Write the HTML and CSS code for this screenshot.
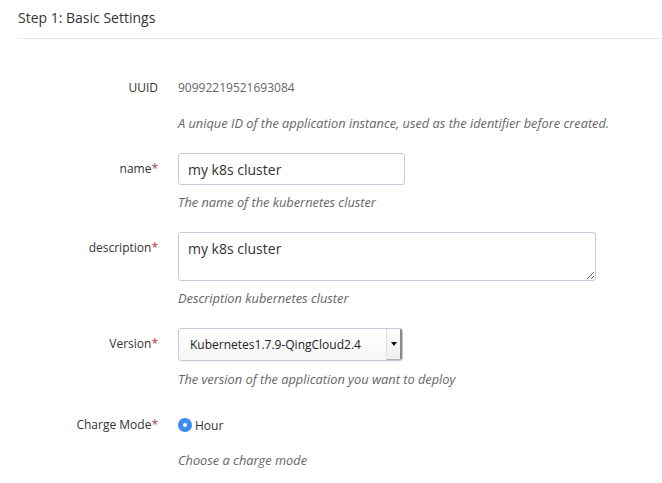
FILE: index.html
```html
<!DOCTYPE html>
<html>
<head>
<meta charset="utf-8">
<link rel="stylesheet" href="styles.css">
</head>
<body>
<div class="page">
  <div class="header"><h1 class="title">Step 1: Basic Settings</h1></div>
  <div class="form">
    <div class="row row-uuid">
      <div class="label">UUID</div>
      <div class="control"><span class="value">90992219521693084</span></div>
      <div class="help help-lg">A unique ID of the application instance, used as the identifier before created.</div>
    </div>
    <div class="row">
      <div class="label">name<span class="req">*</span></div>
      <div class="control"><input class="input" type="text" value="my k8s cluster"></div>
      <div class="help">The name of the kubernetes cluster</div>
    </div>
    <div class="row">
      <div class="label">description<span class="req">*</span></div>
      <div class="control"><textarea class="textarea">my k8s cluster</textarea></div>
      <div class="help">Description kubernetes cluster</div>
    </div>
    <div class="row">
      <div class="label">Version<span class="req">*</span></div>
      <div class="control">
        <div class="select">
          <span class="select-text">Kubernetes1.7.9-QingCloud2.4</span>
          <span class="select-arrow"><span class="tri"></span></span>
        </div>
      </div>
      <div class="help help-md">The version of the application you want to deploy</div>
    </div>
    <div class="row">
      <div class="label">Charge Mode<span class="req">*</span></div>
      <div class="control">
        <label class="radio"><span class="radio-dot"></span><span class="radio-text">Hour</span></label>
      </div>
      <div class="help help-lg">Choose a charge mode</div>
    </div>
  </div>
</div>
</body>
</html>
```
FILE: styles.css
```css
* { box-sizing: border-box; }
html, body { margin: 0; padding: 0; background: #fff; }
body {
  font-family: "Open Sans", "DejaVu Sans", sans-serif;
  color: #333;
  font-size: 12px;
}
.page { padding-left: 18px; width: 662px; }
.header {
  padding: 8px 0 10px;
  border-bottom: 1px solid #e8e8e8;
}
.title {
  margin: 0;
  font-size: 14px;
  font-weight: 400;
  line-height: 20px;
  color: #333;
}
.form { padding-top: 33px; }
.row {
  display: grid;
  grid-template-columns: 140px 1fr;
  column-gap: 20px;
  margin-bottom: 22px;
}
.row:last-child { margin-bottom: 0; }
.label {
  text-align: right;
  line-height: 32px;
  font-size: 12px;
  color: #333;
}
.req { color: #b03a3a; }
.control { min-height: 32px; display: flex; align-items: flex-start; }
.value { line-height: 32px; color: #666; }
.help {
  grid-column: 2;
  margin-top: 9px;
  line-height: 16px;
  font-style: italic;
  color: #666;
  font-size: 12.8px;
}
.help-md { margin-top: 10px; }
.help-lg { margin-top: 11px; }
.input {
  width: 227px;
  height: 32px;
  border: 1px solid #c9c7d9;
  border-radius: 3px;
  padding: 0 9px;
  font-family: inherit;
  font-size: 14px;
  color: #333;
  outline: none;
  background: #fff;
}
.textarea {
  width: 418px;
  height: 49px;
  border: 1px solid #c9c7d9;
  border-radius: 3px;
  padding: 6px 9px;
  line-height: 20px;
  font-family: inherit;
  font-size: 14px;
  color: #333;
  outline: none;
  resize: both;
  display: block;
  margin: 0;
}
.select {
  width: 225px;
  height: 33px;
  border: 1px solid #c9c7d9;
  border-radius: 3px;
  display: flex;
  align-items: stretch;
  background: linear-gradient(#fff, #f6f6f8);
  box-shadow: 0 1px 1px rgba(0,0,0,0.06);
}
.select-text {
  flex: 1;
  padding-left: 11px;
  line-height: 31px;
  font-size: 12px;
  color: #222;
}
.select-arrow {
  width: 16px;
  border-left: 1px solid #dedde6;
  border-right: 2px solid #8a8a8a;
  border-bottom: 1px solid #b0b0b0;
  border-radius: 0 2px 2px 0;
  display: flex;
  align-items: center;
  justify-content: center;
  background: linear-gradient(#fdfdfd, #eeeeee);
}
.tri {
  width: 0; height: 0;
  border-left: 3px solid transparent;
  border-right: 3px solid transparent;
  border-top: 4px solid #111;
}
.radio {
  display: flex;
  align-items: center;
  height: 32px;
}
.radio-dot {
  width: 14px;
  height: 14px;
  border-radius: 50%;
  background: #3b8cf3;
  position: relative;
  margin-right: 3px;
}
.radio-dot::after {
  content: "";
  position: absolute;
  left: 5px; top: 5px;
  width: 4px; height: 4px;
  border-radius: 50%;
  background: #fff;
}
.radio-text { font-size: 12px; color: #333; }
```
